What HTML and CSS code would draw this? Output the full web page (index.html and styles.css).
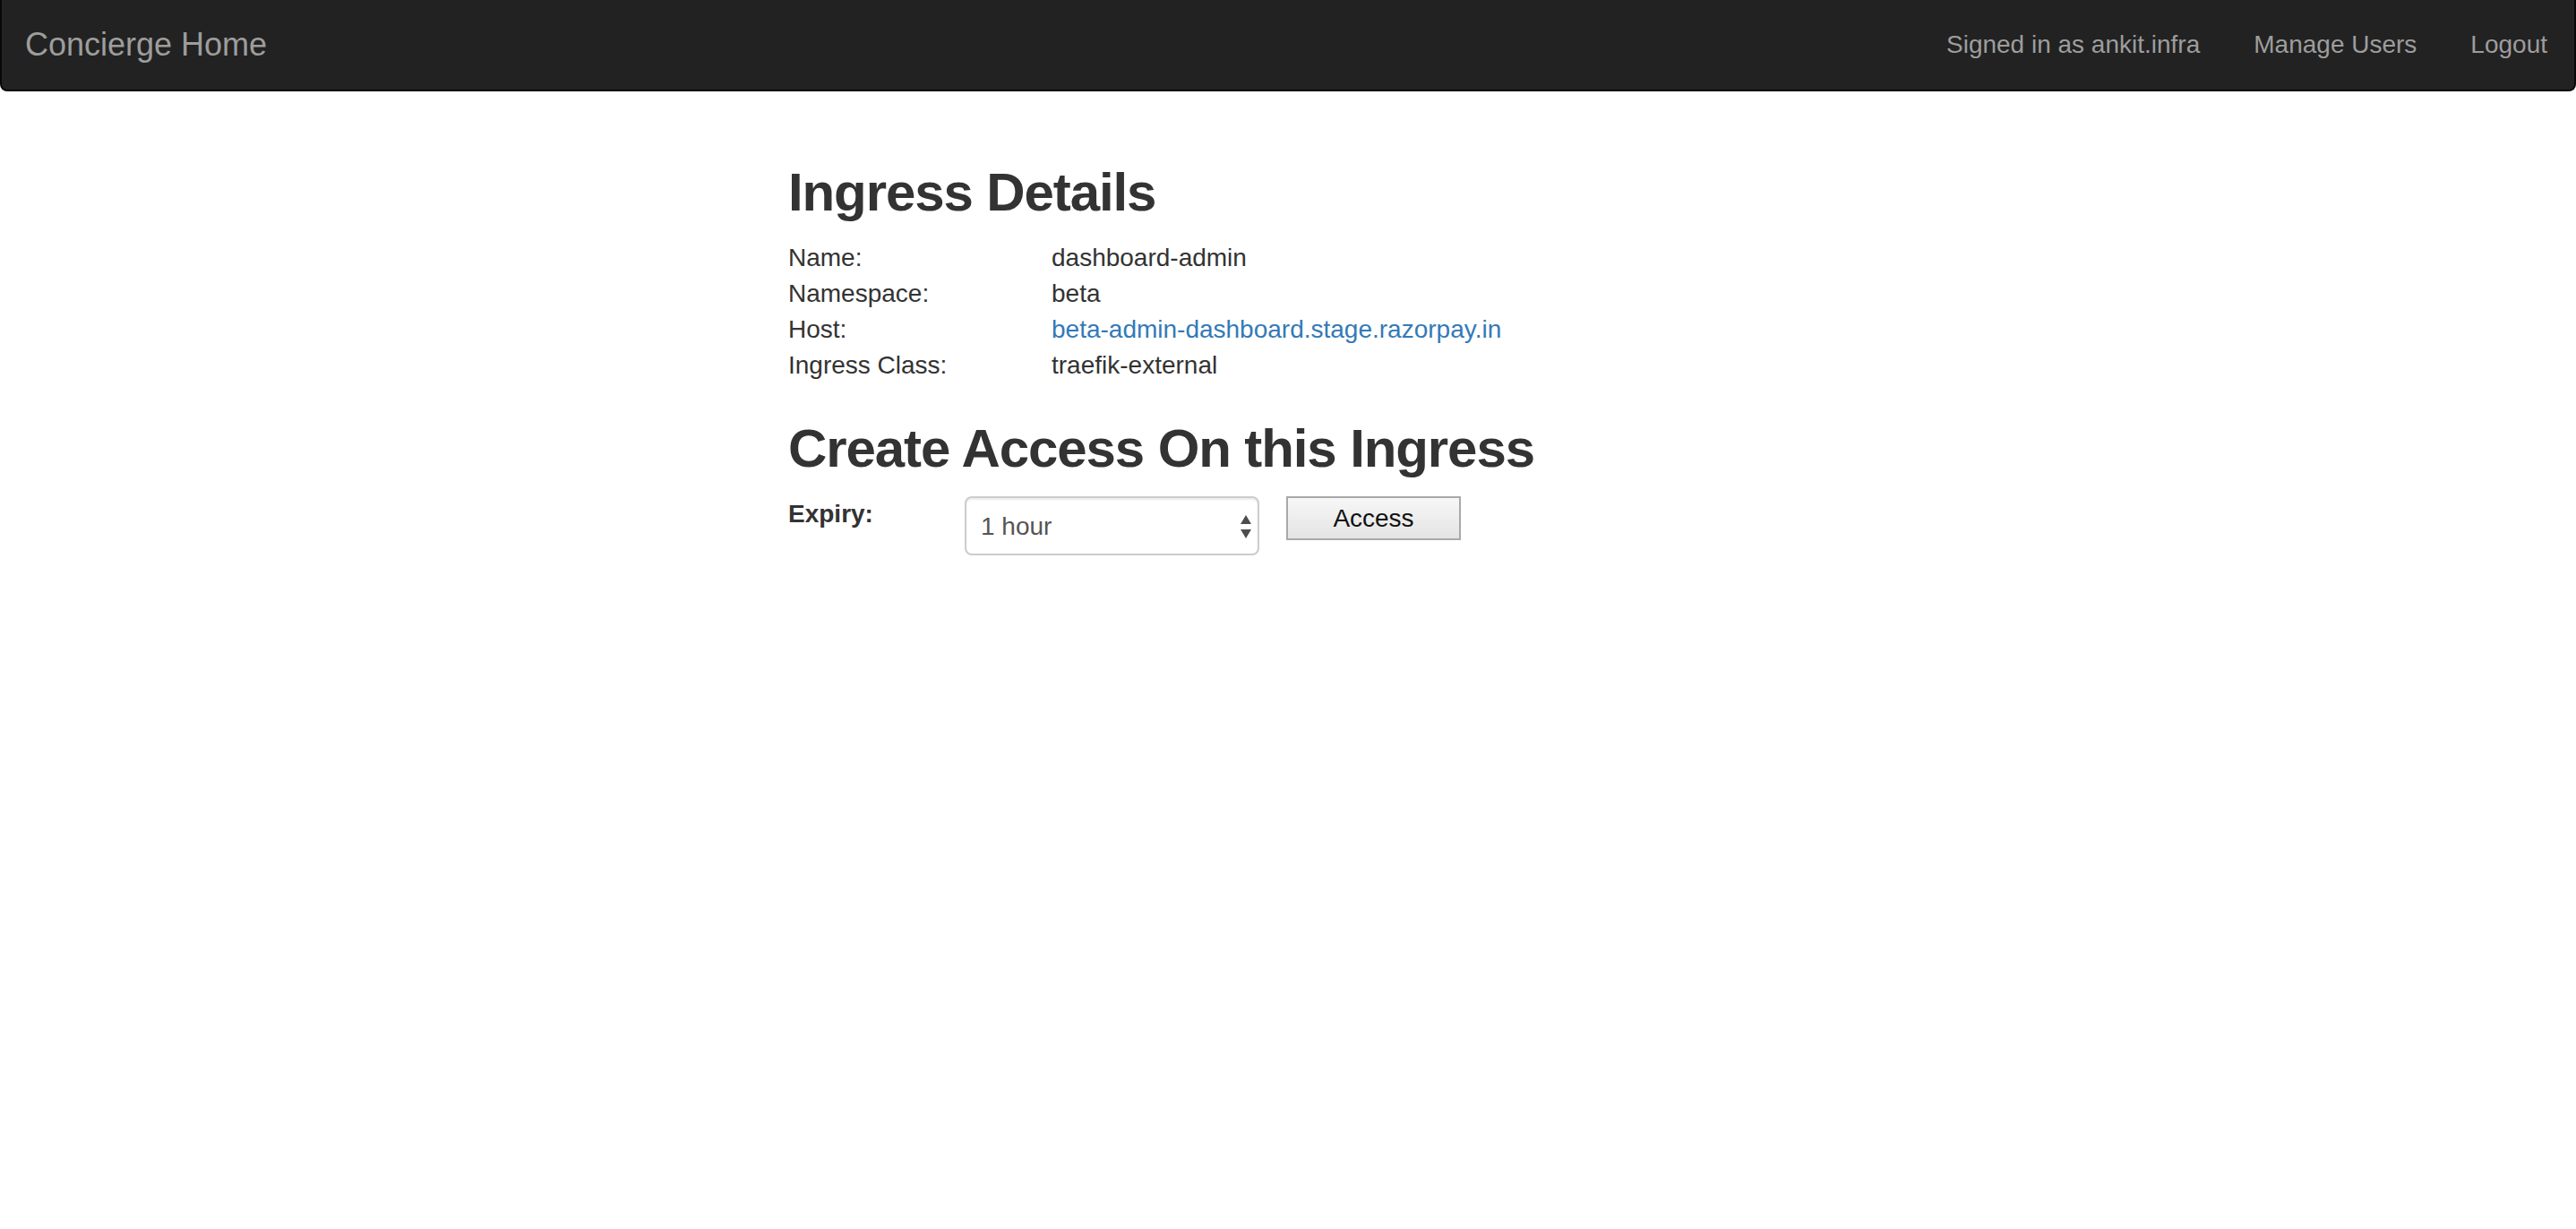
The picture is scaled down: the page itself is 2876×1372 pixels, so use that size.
FILE: index.html
```html
<!DOCTYPE html>
<html lang="en">
<head>
<meta charset="utf-8">
<title>Concierge - Ingress Details</title>
<link rel="stylesheet" href="styles.css">
</head>
<body>
<nav class="navbar">
  <a class="brand" href="#">Concierge Home</a>
  <ul class="nav-right">
    <li><span class="nav-text">Signed in as ankit.infra</span></li>
    <li><a class="nav-link" href="#">Manage Users</a></li>
    <li><a class="nav-link" href="#">Logout</a></li>
  </ul>
</nav>
<main class="container">
  <div class="col">
    <h2 class="heading">Ingress Details</h2>
    <dl class="details">
      <dt>Name:</dt><dd>dashboard-admin</dd>
      <dt>Namespace:</dt><dd>beta</dd>
      <dt>Host:</dt><dd><a class="link" href="#">beta-admin-dashboard.stage.razorpay.in</a></dd>
      <dt>Ingress Class:</dt><dd>traefik-external</dd>
    </dl>
    <h2 class="heading">Create Access On this Ingress</h2>
    <form class="access-form">
      <label class="form-label" for="expiry">Expiry:</label>
      <span class="select-wrap">
        <select id="expiry" class="select">
          <option>1 hour</option>
          <option>6 hours</option>
          <option>1 day</option>
        </select>
        <svg class="select-arrows" width="12" height="27" viewBox="0 0 12 27" aria-hidden="true">
          <polygon points="6,0 12,10 0,10" fill="#4d4d4d"/>
          <polygon points="0,16 12,16 6,26" fill="#4d4d4d"/>
        </svg>
      </span>
      <button type="button" class="btn">Access</button>
    </form>
  </div>
</main>
</body>
</html>
```

FILE: styles.css
```css
html, body {
  margin: 0;
  padding: 0;
}

body {
  font-family: "Liberation Sans", Arial, Helvetica, sans-serif;
  font-size: 28px;
  line-height: 40px;
  color: #333333;
  background: #ffffff;
}

.navbar {
  display: flex;
  justify-content: space-between;
  align-items: flex-start;
  height: 100px;
  background: #222222;
  border-style: solid;
  border-color: #080808;
  border-width: 0 2px 2px 2px;
  border-radius: 0 0 8px 8px;
  margin-bottom: 40px;
}

.brand {
  display: block;
  padding: 30px 30px 30px 26px;
  font-size: 36px;
  line-height: 40px;
  color: #9d9d9d;
  text-decoration: none;
}

.nav-right {
  display: flex;
  list-style: none;
  margin: 0;
  padding: 0;
}

.nav-text,
.nav-link {
  display: block;
  padding: 30px 30px 30px 30px;
  font-size: 28px;
  line-height: 40px;
  color: #9d9d9d;
  text-decoration: none;
}

.container {
  display: flow-root;
  width: 2340px;
  margin: 0 auto;
  padding: 0 30px;
  box-sizing: border-box;
}

.col {
  margin-left: 582px;
  width: 1140px;
}

.heading {
  font-size: 60px;
  line-height: 66px;
  font-weight: 700;
  letter-spacing: -1.1px;
  margin: 40px 0 20px;
  color: #333333;
}

.details {
  display: grid;
  grid-template-columns: 294px auto;
  margin: 0;
}

.details dt,
.details dd {
  margin: 0;
  font-weight: 400;
}

.link {
  color: #337ab7;
  text-decoration: none;
}

.access-form {
  display: flex;
  align-items: flex-start;
}

.form-label {
  width: 197px;
  flex: 0 0 197px;
  font-weight: 700;
  line-height: 40px;
}

.select-wrap {
  position: relative;
  display: block;
  width: 329px;
}

.select {
  display: block;
  width: 329px;
  height: 66px;
  box-sizing: border-box;
  padding: 0 40px 0 16px;
  font-family: "Liberation Sans", Arial, sans-serif;
  font-size: 28px;
  color: #555555;
  background: #ffffff;
  border: 2px solid #cccccc;
  border-radius: 8px;
  appearance: none;
  -webkit-appearance: none;
  box-shadow: inset 0 2px 2px rgba(0, 0, 0, 0.075);
}

.select-arrows {
  position: absolute;
  right: 9px;
  top: 21px;
  pointer-events: none;
}

.btn {
  margin-left: 30px;
  width: 195px;
  height: 49px;
  box-sizing: border-box;
  padding: 0;
  font-family: "Liberation Sans", Arial, sans-serif;
  font-size: 28px;
  color: #111111;
  background: linear-gradient(#f7f7f7, #e4e4e4);
  border: 2px solid #a9a9a9;
  border-radius: 0;
}
```
